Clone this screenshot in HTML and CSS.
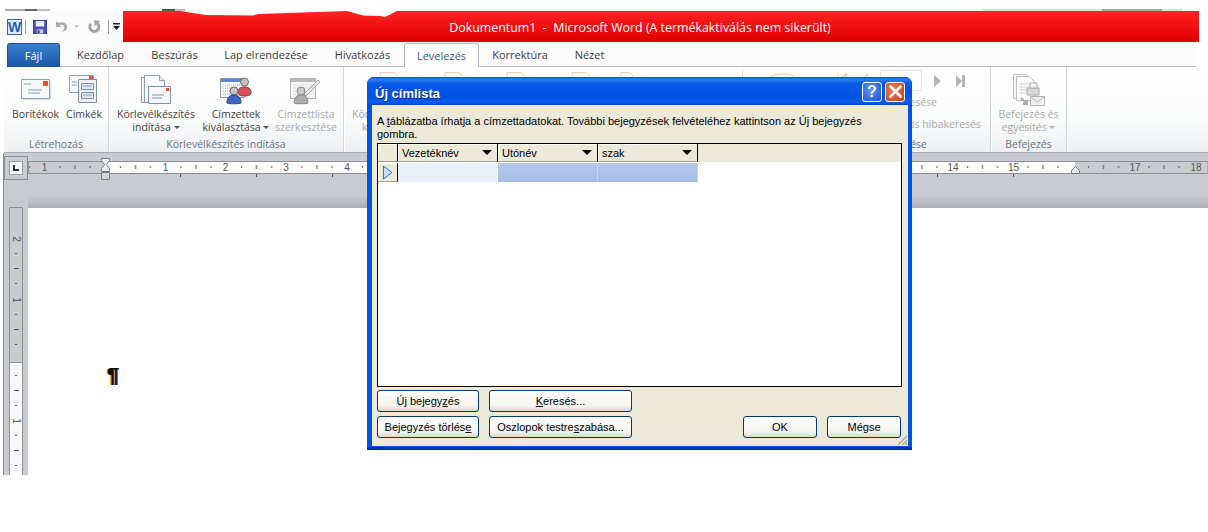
FILE: index.html
```html
<!DOCTYPE html>
<html lang="hu">
<head>
<meta charset="utf-8">
<title>Dokumentum1 - Microsoft Word</title>
<link rel="stylesheet" href="styles.css">
</head>
<body>
<div class="page">
  <div class="scraps"></div>
  <header class="titlebar">
    <div class="qat">
      <svg class="qat-word" width="15" height="16" viewBox="0 0 15 16"><rect x=".5" y=".5" width="14" height="15" fill="#dfeaf8" stroke="#2f66b5"/><text x="7.500" y="13" text-anchor="middle" class="word-w">W</text></svg>
      <span class="qat-sep"></span>
      <svg class="qat-save" width="14" height="14" viewBox="0 0 15 15"><path d="M0 0h15v15H0z" fill="#4a4fb0"/><path d="M3 1h9v6H3z" fill="#e8ecf6"/><path d="M4 10h7v5H4z" fill="#c8ccd8"/><path d="M5 11h2v3H5z" fill="#30336a"/><path d="M0 0h15v15H0z" fill="none" stroke="#2e3484"/></svg>
      <svg class="qat-undo" width="13" height="13" viewBox="0 0 14 13"><path d="M1 1v6h6L5 5c3-1 5 .5 5 2.500 0 2-1 3.500-3 4.500 4 0 6-2.500 6-5 0-4-4-6.500-9-4.500z" fill="#a9abb0"/></svg>
      <svg class="qat-drop" width="5" height="3" viewBox="0 0 6 3"><path d="M0 0h6L3 3z" fill="#b4b6ba"/></svg>
      <svg class="qat-redo" width="12" height="13" viewBox="0 0 12 13"><path d="M8.500 3A4.500 4.500 0 1 1 3 4" fill="none" stroke="#a2a4a8" stroke-width="3"/><path d="M6.500 0v6.500L12 1z" fill="#a2a4a8"/></svg>
      <span class="qat-sep qat-sep-b"></span>
      <svg class="qat-custom" width="7" height="7" viewBox="0 0 7 7"><path d="M0 0h7v1.500H0z" fill="#222"/><path d="M0 3h7L3.500 7z" fill="#222"/></svg>
    </div>
    <div class="title">Dokumentum1&nbsp; -&nbsp; Microsoft Word (A termékaktiválás nem sikerült)</div>
  </header>

  <nav class="tabs">
    <span class="tab tab-file">Fájl</span>
    <span class="tab tab-w75">Kezdőlap</span>
    <span class="tab tab-w73">Beszúrás</span>
    <span class="tab tab-w110">Lap elrendezése</span>
    <span class="tab tab-w83">Hivatkozás</span>
    <span class="tab tab-w75 tab-active">Levelezés</span>
    <span class="tab tab-w82">Korrektúra</span>
    <span class="tab tab-w57">Nézet</span>
  </nav>

  <section class="ribbon">
    <div class="group group-a">
      <div class="buttons">
        <div class="rbtn rbtn-bor">
          <svg width="30" height="30" viewBox="0 0 30 30"><path d="M.5 5.500h28v19H.5z" fill="#f4f7fb" stroke="#8f9fb3"/><path d="M29.500 7v18.500H2" fill="none" stroke="#d8dde4"/><path d="M22 7h5v5h-5z" fill="#e8552a"/><path d="M3 10h7M7 16h14M7 19h12" stroke="#8ca0ba"/></svg>
          <span>Borítékok</span>
        </div>
        <div class="rbtn rbtn-cim">
          <svg width="30" height="30" viewBox="0 0 30 30"><path d="M.5 1.500h24v17H.5z" fill="#f4f7fb" stroke="#8f9fb3"/><path d="M20 2h4v4h-4z" fill="#e8552a"/><path d="M3 8h5M3 11h5" stroke="#8ca0ba"/><path d="M9.500 5.500h18v23h-18z" fill="#eef2f8" stroke="#7f90a8"/><path d="M12.500 9.500h12v6h-12zM12.500 18.500h12v6h-12z" fill="#dfe7f2" stroke="#7f90a8"/><path d="M14 12h9M14 21h9" stroke="#8ca0ba"/></svg>
          <span>Címkék</span>
        </div>
      </div>
      <div class="group-label">Létrehozás</div>
    </div>

    <div class="group group-b">
      <div class="buttons">
        <div class="rbtn rbtn-tall rbtn-kor">
          <svg width="32" height="32" viewBox="0 0 32 32"><path d="M1.500 3.500h14l3 3v22h-17z" fill="#f1f4f9" stroke="#8f9fb3"/><path d="M4.500 1.500h15l5 5v22h-20z" fill="#f7f9fc" stroke="#8f9fb3"/><path d="M19.500 1.500v5h5" fill="#dfe5ee" stroke="#8f9fb3"/><path d="M8.500 12.500h22v17h-22z" fill="#f4f7fb" stroke="#7f90a8"/><path d="M26 14h3v3h-3z" fill="#e8552a"/><path d="M12 21h12M12 24h10" stroke="#7b93b4"/></svg>
          <span>Körlevélkészítés<br>indítása <i class="caret"></i></span>
        </div>
        <div class="rbtn rbtn-tall rbtn-zett">
          <svg width="32" height="32" viewBox="0 0 32 32"><path d="M.5 4.500h24v19H.5z" fill="#f8fafc" stroke="#8a97ac"/><path d="M1 5h23v3H1z" fill="#5a86cc"/><path d="M3 11h20M3 14h20M3 17h20M3 20h20" stroke="#aab6c8" stroke-dasharray="1 1"/><circle cx="24.500" cy="8" r="4" fill="#c6bdb8" stroke="#6d6d6d"/><path d="M18 19c0-5 3-6 6.500-6s6.500 1 6.500 6c0 2-3 3-6.500 3S18 21 18 19z" fill="#d9505a" stroke="#a03a40"/><circle cx="14" cy="17" r="4" fill="#c9c3bd" stroke="#6d6d6d"/><path d="M7 29c0-6 3-8 7-8s7 2 7 8c0 1-14 1-14 0z" fill="#3e66c2" stroke="#2b478d"/></svg>
          <span>Címzettek<br>kiválasztása <i class="caret"></i></span>
        </div>
        <div class="rbtn rbtn-tall rbtn-off rbtn-lista">
          <svg width="32" height="32" viewBox="0 0 32 32"><path d="M.5 4.500h25v20H.5z" fill="#f5f5f5" stroke="#b4b4b4"/><path d="M1 5h24v3H1z" fill="#b8b8b8"/><path d="M3 11h21M3 14h21M3 17h21M3 20h21" stroke="#ccc" stroke-dasharray="1 1"/><path d="M15 19L28 6l2 2-13 13-3 1z" fill="#e8e8e8" stroke="#a6a6a6"/><circle cx="11" cy="17" r="4" fill="#c8c8c8" stroke="#8a8a8a"/><path d="M4 29c0-6 3-8 7-8s7 2 7 8c0 1-14 1-14 0z" fill="#adadad" stroke="#8a8a8a"/></svg>
          <span>Címzettlista<br>szerkesztése</span>
        </div>
      </div>
      <div class="group-label">Körlevélkészítés indítása</div>
    </div>

    <div class="group group-c">
      <div class="hidden-row">
        <div class="rbtn-off rbtn-hid"><span>Kör</span><span class="hid-k">k</span></div>
        <svg class="peek" width="505" height="12" viewBox="0 0 505 12"><g fill="#fbfbfb" stroke="#d2d2d2"><path d="M5 14V2.500h14l4 4V14zM70 14V2.500h14l4 4V14zM132 14V2.500h14l4 4V14zM197 14V2.500h14l4 4V14zM246 14V2.500h9l3 3V14z"/><path d="M393 14c0-8 7-10 15-10s15 2 15 10z"/></g><path d="M262 8h42" stroke="#d4d4d4" stroke-dasharray="4 2" stroke-width="2"/><path d="M367.500 0v12" stroke="#dcdde0"/><path d="M463 3v9M472 3l-6 4 6 5z" fill="#d8d8d8" stroke="#d8d8d8"/><path d="M493 3l-5 4 5 5z" fill="#dcdcdc"/></svg>
        <div class="nav-box"></div>
        <svg class="nav-next" width="32" height="12" viewBox="0 0 32 12"><path d="M0 0l7 6-7 6z" fill="#b3b3b3"/><path d="M22 0l6 6-6 6zM28 0h3v12h-3z" fill="#b3b3b3"/></svg>
      </div>
      <div class="res-a">esése</div>
      <div class="res-b">us hibakeresés</div>
      <div class="group-label res-c">ése</div>
    </div>

    <div class="group group-d">
      <div class="buttons">
        <div class="rbtn rbtn-off rbtn-tall rbtn-bef">
          <svg width="32" height="33" viewBox="0 0 32 33"><path d="M.5 1.500h13l3 3v21H.5z" fill="#f4f4f4" stroke="#bdbdbd"/><path d="M3.500 3.500h13l5 5v19h-18z" fill="#fbfbfb" stroke="#bdbdbd"/><path d="M6 11h11M6 14h11M6 17h8M6 20h8" stroke="#cfcfcf"/><path d="M14 15h12v7H14z" fill="#d9d9d9" stroke="#a9a9a9"/><path d="M17 10h7v5h-7z" fill="#f4f4f4" stroke="#aaa"/><path d="M17.500 23.500h14v9h-14z" fill="#f0f0f0" stroke="#b2b2b2"/><path d="M18 24l6.500 5 6.500-5" fill="none" stroke="#b2b2b2"/><path d="M8 25l6 6M14 27v4h-4" fill="none" stroke="#a7b0a7" stroke-width="2"/></svg>
          <span>Befejezés és<br>egyesítés <i class="caret caret-off"></i></span>
        </div>
      </div>
      <div class="group-label">Befejezés</div>
    </div>
  </section>

  <section class="workspace">
    <aside class="side">
      <div class="tabstop"><span class="tabstop-inner"><span class="tabstop-l"></span></span></div>
      <svg class="vruler" width="15" height="268" viewBox="9 207 15 268">
        <path d="M9.500 207.500h13v267h-13z" fill="#c8cbd0" stroke="#8b8e94"/>
        <path d="M10 362h12v113H10z" fill="#fbfbfb"/>
        <path d="M9.500 362.500h13M9.500 362v113M22.500 362v113" stroke="#8b8e94" fill="none"/>
        <path d="M15 253.500h2M15 283.500h2M15 314.500h2M15 344.500h2M15 375.500h2M15 405.500h2M15 435.500h2M15 465.500h2M14 268.500h5M14 329.500h5M14 390.500h5M14 450.500h5" stroke="#555"/>
        <text transform="translate(12.500 239) rotate(90)" text-anchor="middle" class="rtext">2</text>
        <text transform="translate(12.500 300) rotate(90)" text-anchor="middle" class="rtext">1</text>
        <text transform="translate(12.500 421) rotate(90)" text-anchor="middle" class="rtext">1</text>
      </svg>
    </aside>
    <div class="canvas">
      <svg class="hruler" width="1180" height="24" viewBox="28 157 1180 24">
        <defs><pattern id="ticks" x="105" y="161" width="60.500" height="12" patternUnits="userSpaceOnUse">
          <path d="M15 5h1v2h-1zM45 5h1v2h-1zM30 4h1v4h-1z" fill="#555"/></pattern></defs>
        <path d="M28.500 161.500h1179.500v12H28.500z" fill="#c8cbd0" stroke="#8b8e94"/>
        <path d="M105 162h970v11H105z" fill="#fbfbfb"/>
        <path d="M29 162h1179v11H29z" fill="url(#ticks)"/>
        <path d="M180.500 174v3M256.500 174v3M332.500 174v3M937.500 174v3M1013.500 174v3" stroke="#555"/>
        <g class="rtext" text-anchor="middle"><text x="44.500" y="171">1</text><text x="165.500" y="171">1</text><text x="225.500" y="171">2</text><text x="286" y="171">3</text><text x="347" y="171">4</text><text x="953" y="171">14</text><text x="1013.500" y="171">15</text><text x="1135" y="171">17</text><text x="1196" y="171">18</text></g>
        <path d="M101.500 158.500h8v2l-3 4 3 4v3h-8v-3l3-4-3-4z" fill="#eceded" stroke="#7a7c80"/>
        <path d="M101.500 172.500h8v7h-8z" fill="#d6d7da" stroke="#7a7c80"/>
        <path d="M1071.500 173.500v-3l4-4 4 4v3z" fill="#eceded" stroke="#7a7c80"/>
      </svg>
      <div class="shade"></div>
      <main class="doc"><span class="pilcrow">¶</span></main>
    </div>
  </section>

  <div class="dialog">
    <div class="dlg-title">
      <span class="dlg-name">Új címlista</span>
      <span class="dlg-btn dlg-help">?</span>
      <span class="dlg-btn dlg-close">
        <svg width="13" height="13" viewBox="0 0 13 13"><path d="M1.500 1.500l10 10M11.500 1.500l-10 10" stroke="#fff" stroke-width="2.600" stroke-linecap="square"/></svg>
      </span>
    </div>
    <div class="dlg-body">
      <p class="dlg-text">A <u>t</u>áblázatba írhatja a címzettadatokat. További bejegyzések felvételéhez kattintson az Új bejegyzés gombra.</p>
      <div class="grid">
        <div class="grid-head">
          <span class="hcell hcell-row"></span>
          <span class="hcell">Vezetéknév<i class="arrow"></i></span>
          <span class="hcell">Utónév<i class="arrow"></i></span>
          <span class="hcell">szak<i class="arrow"></i></span>
        </div>
        <div class="grid-row">
          <span class="hcell hcell-row hcell-cur"><svg width="11" height="15" viewBox="0 0 11 15"><path d="M1.500 1v13l8.500-6.500z" fill="#cfe0f6" stroke="#2f73d6"/></svg></span>
          <span class="cell cell-edit"></span>
          <span class="cell"></span>
          <span class="cell"></span>
        </div>
      </div>
      <div class="dlg-foot">
        <div class="foot-left">
          <button class="xp">Új bejegy<u>z</u>és</button>
          <button class="xp"><u>K</u>eresés...</button>
          <button class="xp">Bejegyzés törlés<u>e</u></button>
          <button class="xp">Oszlopok testre<u>s</u>zabása...</button>
        </div>
        <div class="foot-right">
          <button class="xp">OK</button>
          <button class="xp">Mégse</button>
        </div>
      </div>
      <svg class="grip" width="11" height="11" viewBox="0 0 11 11"><path d="M10 1L1 10M10 5l-5 5M10 8l-2 2" stroke="#a8a594" stroke-width="1.200"/></svg>
    </div>
  </div>
</div>
</body>
</html>
```

FILE: styles.css
```css
* { box-sizing: border-box; }
html, body { margin: 0; padding: 0; background: #fff; }
.page {
  position: relative;
  width: 1208px;
  height: 532px;
  overflow: hidden;
  background: #fff;
  font-family: "Open Sans", "Noto Sans", sans-serif;
  font-size: 10.500px;
  color: #444;
}
.scraps {
  height: 2px;
  margin-top: 9px;
  background: linear-gradient(90deg,
    #fff 5px, #aaa 5px, #aaa 25px, #666 25px, #666 37px, #bbb 37px, #bbb 50px, #fff 50px,
    #fff 162px, #555 162px, #555 175px, #bbb 175px, #bbb 185px, #fff 185px,
    #fff 983px, #ddd 983px, #ddd 1102px, #aaa 1102px, #aaa 1162px, #ddd 1162px, #ddd 1183px, #fff 1183px);
}

/* title row */
.titlebar { display: flex; height: 31px; }
.qat {
  flex: 0 0 123px;
  min-width: 0;
  display: flex;
  align-items: center;
  padding-left: 7px;
  background: #fbfbfc;
}
.qat svg { flex: none; }
.word-w { font: bold 14px "Liberation Sans", sans-serif; fill: #1f5db4; }
.qat-sep { flex: none; width: 1px; height: 14px; background: #9a9a9a; margin: 0 7px 0 3px; }
.qat-save { margin-right: 8px; }
.qat-undo { margin-right: 6px; }
.qat-drop { margin-right: 9px; }
.qat-sep-b { margin: 0 4px 0 8px; }
.title {
  flex: 0 0 1076px;
  display: flex;
  align-items: center;
  justify-content: center;
  padding-right: 42px;
  padding-top: 2px;
  color: #fff;
  font-size: 12.400px;
  background: linear-gradient(#ff2222, #dc0000);
  clip-path: polygon(0 0, 57px 0, 83px 4px, 130px 4.500px, 135px 3px, 224px 0, 240px 4.500px, 257px 5px, 262px 6px, 274px 0, 100% 0, 100% 100%, 0 100%);
}

/* tabs */
.tabs {
  display: flex;
  width: 1189px;
  height: 25px;
  margin-left: 7px;
  padding-top: 1px;
  background: #fbfbfc;
  border-bottom: 1px solid #b9bac4;
  font-size: 11px;
}
.tab { display: flex; align-items: center; justify-content: center; color: #3b3b3b; }
.tab-file {
  flex: 0 0 53px;
  margin-right: 3px;
  margin-bottom: -1px;
  color: #fff;
  background: linear-gradient(#3b7fcf, #1a55a8);
  border: 1px solid #1d4f99;
  border-bottom: 0;
  border-radius: 3px 3px 0 0;
}
.tab-w75 { flex: 0 0 75px; }
.tab-w73 { flex: 0 0 73px; }
.tab-w110 { flex: 0 0 110px; }
.tab-w83 { flex: 0 0 83px; }
.tab-w82 { flex: 0 0 82px; }
.tab-w57 { flex: 0 0 57px; }
.tab-active {
  background: #fff;
  border: 1px solid #b9bac4;
  border-bottom: 0;
  border-radius: 3px 3px 0 0;
  margin-bottom: -1px;
  color: #3a5a70;
}

/* ribbon */
.ribbon {
  display: flex;
  height: 86px;
  margin-left: 4px;
  background: linear-gradient(#fff, #fafbfb 60%, #edeff2);
  border-bottom: 1px solid #a6a9af;
  line-height: 13px;
}
.group {
  position: relative;
  display: flex;
  flex-direction: column;
  border-right: 1px solid #d3d5da;
  box-shadow: 1px 0 0 #fff;
}
.group-a { flex: 0 0 105px; }
.group-b { flex: 0 0 235px; }
.group-c { flex: 0 0 647px; }
.group-d { flex: 0 0 76px; }
.buttons { display: flex; flex: 1; }
.group-label {
  height: 16px;
  text-align: center;
  color: #66758a;
  line-height: 16px;
}
.rbtn {
  display: flex;
  flex-direction: column;
  align-items: center;
  text-align: center;
  white-space: nowrap;
  padding-top: 7px;
}
.rbtn svg { margin-bottom: 4px; }
.rbtn-tall svg { margin-bottom: 2px; }
.rbtn-off { color: #a9a9a9; }
.rbtn-bor { width: 55px; margin-left: 4px; }
.rbtn-cim { width: 42px; }
.rbtn-kor { width: 88px; margin-left: 3px; }
.rbtn-zett { width: 70px; margin-left: 1px; }
.rbtn-lista { width: 66px; margin-left: 2px; }
.rbtn-bef { width: 75px; padding-top: 6px; }
.rbtn-bef svg { margin-bottom: 2px; }
.caret, .caret-off {
  display: inline-block;
  width: 0;
  height: 0;
  vertical-align: 2px;
  border: 3px solid transparent;
  border-top-color: #555;
  border-bottom: 0;
}
.caret-off { border-top-color: #b5b5b5; }

.hidden-row { display: flex; height: 27px; }
.rbtn-hid {
  flex: none;
  display: flex;
  flex-direction: column;
  align-items: flex-start;
  width: 23px;
  height: 27px;
  padding-top: 41px;
  margin-left: 8px;
}
.hid-k { padding-left: 10px; }
.peek { flex: none; margin: 3px 0 0 0; }
.nav-box {
  flex: none;
  width: 42px;
  height: 21px;
  margin: 3px 0 0 0;
  border: 1px solid #e2e3e6;
  background: #fdfdfd;
}
.nav-next { flex: none; margin: 8px 0 0 12px; }
.res-a, .res-b, .res-c { text-align: right; color: #a9a9a9; }
.res-a { padding-right: 53px; margin-top: 2px; }
.res-b { padding-right: 9px; margin-top: 9px; }
.res-c { padding-right: 63px; margin-top: auto; color: #66758a; }

/* workspace */
.workspace {
  display: flex;
  height: 322px;
  margin-left: 3px;
  border-left: 1px solid #8b8e94;
  background: #c8cbd0;
}
.side { flex: 0 0 24px; display: flex; flex-direction: column; align-items: flex-start; padding-top: 3px; }
.tabstop {
  width: 24px;
  height: 24px;
  padding: 4px;
  border: 1px solid #8b8e94;
}
.tabstop-inner {
  display: flex;
  align-items: center;
  justify-content: center;
  width: 14px;
  height: 14px;
  background: #f6f6f6;
  border: 1px solid #9a9da3;
}
.tabstop-l { width: 6px; height: 6px; border-left: 2px solid #333; border-bottom: 2px solid #333; }
.vruler { margin: 27px 0 0 5px; display: block; flex: none; }
.rtext { font: 10px "Liberation Sans", sans-serif; fill: #555; }
.canvas { flex: 1; display: flex; flex-direction: column; min-width: 0; }
.hruler { display: block; flex: none; margin-top: 4px; }
.shade { height: 27px; flex: none; background: linear-gradient(#c8cbd0 55%, #abaeb4); }
.doc { flex: 1; background: #fff; padding: 155px 0 0 79px; }
.pilcrow {
  display: block;
  width: 12px;
  font: bold 21px/24px "Liberation Sans", sans-serif;
  color: #000;
  text-shadow: -1px 0 0 #e08a20, 1px 0 0 #2050c0;
}

/* dialog */
.dialog {
  position: absolute;
  left: 367px;
  top: 77px;
  width: 545px;
  height: 373px;
  display: flex;
  flex-direction: column;
  background: #0054e3;
  border-radius: 7px 7px 0 0;
  border-bottom: 3px solid #0030a8;
  font-family: "Liberation Sans", sans-serif;
  font-size: 11px;
  color: #000;
}
.dlg-title {
  flex: 0 0 28px;
  display: flex;
  align-items: center;
  padding: 1px 7px 0 8px;
  border-radius: 7px 7px 0 0;
  background: linear-gradient(#0a57d8, #2a80f0 10%, #0558e6 22%, #0054e3 70%, #0a5cec 90%, #0048cc);
}
.dlg-name {
  flex: 1;
  padding-top: 4px;
  color: #fff;
  font: bold 13px "Liberation Sans", sans-serif;
  text-shadow: 1px 1px 0 #0a2a80;
}
.dlg-btn {
  display: flex;
  align-items: center;
  justify-content: center;
  width: 20px;
  height: 20px;
  margin-left: 3px;
  border: 1px solid #fff;
  border-radius: 3px;
  color: #fff;
  font: bold 16px "Liberation Sans", sans-serif;
}
.dlg-help { background: radial-gradient(circle at 40% 40%, #5a90f5, #2150d6); }
.dlg-close { background: radial-gradient(circle at 40% 40%, #e8805a, #c93c14); }
.dlg-body {
  position: relative;
  flex: 1;
  display: flex;
  flex-direction: column;
  margin: 0 4px 1px 5px;
  padding: 0 6px 0 5px;
  background: #ece9d8;
}
.dlg-text { margin: 10px 0 2px; line-height: 13px; height: 26px; }
.grid {
  height: 244px;
  background: #fff;
  border: 1px solid #000;
}
.grid-head {
  display: flex;
  height: 19px;
  background: #ece9d8;
  border-bottom: 1px solid #fff;
}
.hcell {
  display: flex;
  align-items: center;
  justify-content: space-between;
  width: 100px;
  height: 18px;
  padding: 0 5px 0 4px;
  background: #ece9d8;
  border-right: 1px solid #000;
  border-bottom: 1px solid #a5a28f;
  box-shadow: inset 1px 1px 0 #fff;
}
.hcell-row { width: 20px; padding: 0; justify-content: center; }
.arrow { width: 0; height: 0; border: 5px solid transparent; border-top: 5px solid #000; border-bottom: 0; }
.grid-row { display: flex; height: 19px; }
.hcell-cur { height: 19px; }
.cell {
  width: 100px;
  height: 19px;
  background: linear-gradient(#b4c8ea, #a7bde4);
  border-right: 1px solid #c8d4ea;
}
.cell-edit { background: #e9eef8; border-right-color: #fff; }
.dlg-foot { display: flex; justify-content: space-between; margin-top: 3px; }
.foot-left { display: grid; grid-template-columns: 102px 143px; gap: 4px 10px; }
.foot-right { display: flex; gap: 10px; align-items: flex-end; margin-right: 1px; }
.xp {
  height: 22px;
  padding: 0;
  font: 11px "Liberation Sans", sans-serif;
  color: #000;
  border: 1px solid #003c74;
  border-radius: 3px;
  background: linear-gradient(#fff, #f4f3ee 75%, #dcd8c8);
}
.foot-right .xp { width: 74px; }
.grip { position: absolute; right: 0; bottom: 0; }
```
